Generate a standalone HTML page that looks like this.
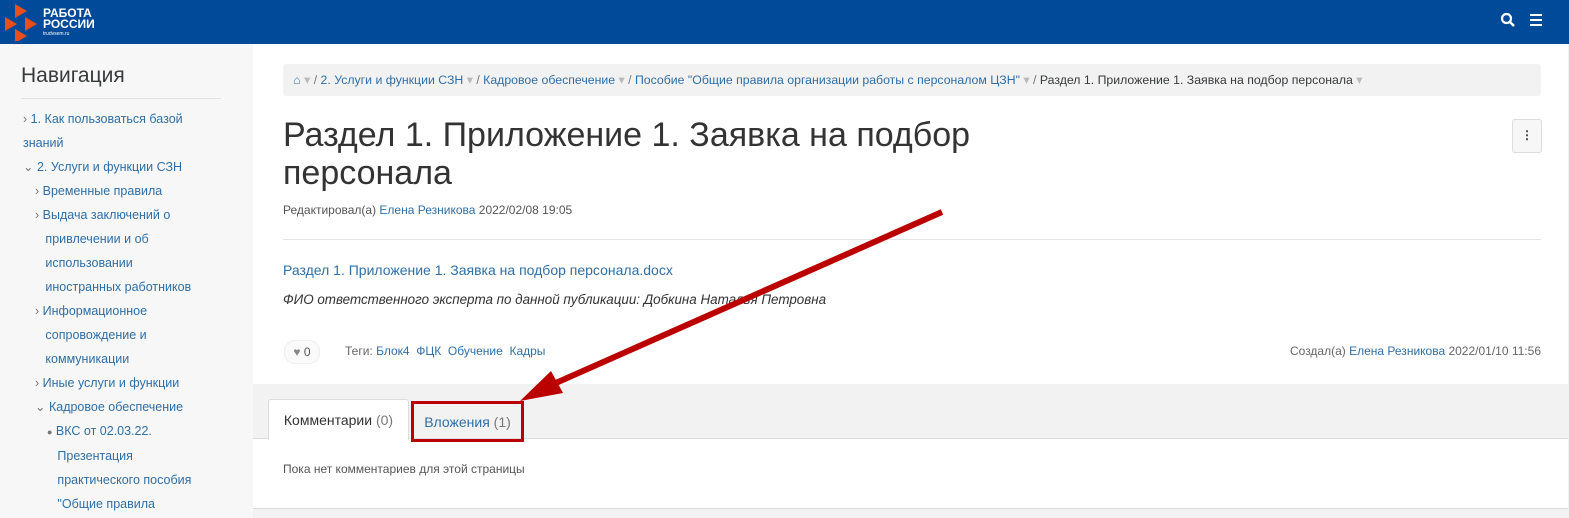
<!DOCTYPE html>
<html><head><meta charset="utf-8"><style>
body{margin:0;width:1569px;height:518px;overflow:hidden;font-family:"Liberation Sans",sans-serif;background:#f2f2f2;position:relative;color:#373a3c}
a{color:#2f6fa7;text-decoration:none}
.hdr{position:absolute;left:0;top:0;width:1569px;height:44px;background:#004a99}
.side{position:absolute;left:0;top:44px;width:253px;height:474px;background:#f7f7f7}
.side h2{font-weight:normal;font-size:21px;margin:0;position:absolute;left:21px;top:20px;color:#373a3c}
.side hr{position:absolute;left:21px;top:54px;width:200px;border:0;border-top:1px solid #e3e3e3;margin:0}
.nav{position:absolute;left:23px;top:63px;font-size:12.5px;line-height:24px;color:#2f6fa7;width:230px;white-space:nowrap}
.nav div{position:relative}
.c{color:#777}
.main{position:absolute;left:253px;top:44px;width:1315px;height:340px;background:#fff}
.bc{position:absolute;left:283px;top:64px;width:1258px;height:32px;background:#f2f2f2;border-radius:3px;font-size:12.3px;line-height:32px;color:#777}
.bot{position:absolute;left:253px;top:438px;width:1315px;height:70px;background:#fff;border-bottom:1px solid #ddd}
</style></head><body>
<div class="hdr">
<svg style="position:absolute;left:3px;top:3px" width="36" height="38"><polygon points="12,1 24,8 12,15" fill="#e94e1b"/><polygon points="2,14 14,21 2,28" fill="#e94e1b"/><polygon points="22,14 34,21 22,28" fill="#e94e1b"/><polygon points="12,26 24,33 12,40" fill="#e94e1b"/></svg>
<div style="position:absolute;left:43px;top:8px;color:#fff;font-weight:bold;font-size:12px;line-height:11px">РАБОТА<br>РОССИИ<div style="font-size:5px;font-weight:normal;line-height:8px">trudvsem.ru</div></div>
<svg style="position:absolute;left:1500px;top:12px" width="16" height="16"><circle cx="6.5" cy="6.5" r="4.5" fill="none" stroke="#fff" stroke-width="2.2"/><line x1="10" y1="10" x2="14" y2="14" stroke="#fff" stroke-width="2.5"/></svg>
<div style="position:absolute;left:1530px;top:14px;width:12px;height:2px;background:#fff;box-shadow:0 5px #fff,0 10px #fff"></div>
</div>
<div class="side"><h2>Навигация</h2><hr>
<div class="nav">
<div><span class="c">›</span> 1. Как пользоваться базой<br>знаний</div>
<div><span class="c">⌄</span> 2. Услуги и функции СЗН</div>
<div style="left:12px"><span class="c">›</span> Временные правила</div>
<div style="left:12px"><span class="c">›</span> Выдача заключений о<br>&nbsp;&nbsp;&nbsp;привлечении и об<br>&nbsp;&nbsp;&nbsp;использовании<br>&nbsp;&nbsp;&nbsp;иностранных работников</div>
<div style="left:12px"><span class="c">›</span> Информационное<br>&nbsp;&nbsp;&nbsp;сопровождение и<br>&nbsp;&nbsp;&nbsp;коммуникации</div>
<div style="left:12px"><span class="c">›</span> Иные услуги и функции</div>
<div style="left:12px"><span class="c">⌄</span> Кадровое обеспечение</div>
<div style="left:24px"><span class="c" style="font-size:9px">●</span> ВКС от 02.03.22.<br>&nbsp;&nbsp;&nbsp;Презентация<br>&nbsp;&nbsp;&nbsp;практического пособия<br>&nbsp;&nbsp;&nbsp;"Общие правила</div>
</div></div>
<div class="main"></div>
<div class="bc">&nbsp;&nbsp;&nbsp;<span style="color:#2f6fa7">⌂</span> <span style="color:#bbb">▾</span> / <a>2. Услуги и функции СЗН</a> <span style="color:#bbb">▾</span> / <a>Кадровое обеспечение</a> <span style="color:#bbb">▾</span> / <a>Пособие "Общие правила организации работы с персоналом ЦЗН"</a> <span style="color:#bbb">▾</span> / <span style="color:#373a3c">Раздел 1. Приложение 1. Заявка на подбор персонала</span> <span style="color:#bbb">▾</span></div>
<div style="position:absolute;left:283px;top:116px;font-size:34px;line-height:38px;color:#333">Раздел 1. Приложение 1. Заявка на подбор<br>персонала</div>
<div style="position:absolute;left:1512px;top:119px;width:28px;height:32px;border:1px solid #ddd;border-radius:3px;background:#f7f7f7;text-align:center;line-height:30px;font-weight:bold;font-size:12px">⋮</div>
<div style="position:absolute;left:283px;top:203px;font-size:12px;color:#555">Редактировал(а) <a>Елена Резникова</a> 2022/02/08 19:05</div>
<div style="position:absolute;left:283px;top:239px;width:1258px;border-top:1px solid #e5e5e5"></div>
<div style="position:absolute;left:283px;top:262px;font-size:14px"><a>Раздел 1. Приложение 1. Заявка на подбор персонала.docx</a></div>
<div style="position:absolute;left:283px;top:292px;font-size:13.4px;font-style:italic;color:#333">ФИО ответственного эксперта по данной публикации: Добкина Наталья Петровна</div>
<div style="position:absolute;left:284px;top:340px;width:34px;height:22px;border-radius:11px;background:#fafafa;border:1px solid #eee;font-size:12px;line-height:22px;color:#555;text-align:center"><span style="color:#888">♥</span> 0</div>
<div style="position:absolute;left:345px;top:344px;font-size:12px;color:#666">Теги: <a>Блок4</a>&nbsp; <a>ФЦК</a>&nbsp; <a>Обучение</a>&nbsp; <a>Кадры</a></div>
<div style="position:absolute;right:28px;top:344px;font-size:12px;color:#666">Создал(а) <a>Елена Резникова</a> 2022/01/10 11:56</div>
<div class="bot"></div>
<div style="position:absolute;left:268px;top:399px;width:139px;height:40px;background:#fff;border:1px solid #ddd;border-bottom:0;border-radius:3px 3px 0 0;font-size:14px;line-height:40px;text-align:center;color:#333">Комментарии <span style="color:#777">(0)</span></div>
<div style="position:absolute;left:253px;top:438px;width:15px;border-top:1px solid #ddd"></div>
<div style="position:absolute;left:408px;top:438px;width:1160px;border-top:1px solid #ddd"></div>
<div style="position:absolute;left:411px;top:401px;width:107px;height:35px;border:3px solid #b00;font-size:14px;line-height:36px;text-align:center"><a>Вложения</a> <span style="color:#777">(1)</span></div>
<div style="position:absolute;left:283px;top:462px;font-size:12px;color:#555">Пока нет комментариев для этой страницы</div>
<svg style="position:absolute;left:0;top:0" width="1569" height="518"><line x1="942" y1="212" x2="540" y2="390" stroke="#b00" stroke-width="6"/><polygon points="520,401 551,371 563,393" fill="#b00"/></svg>
</body></html>
